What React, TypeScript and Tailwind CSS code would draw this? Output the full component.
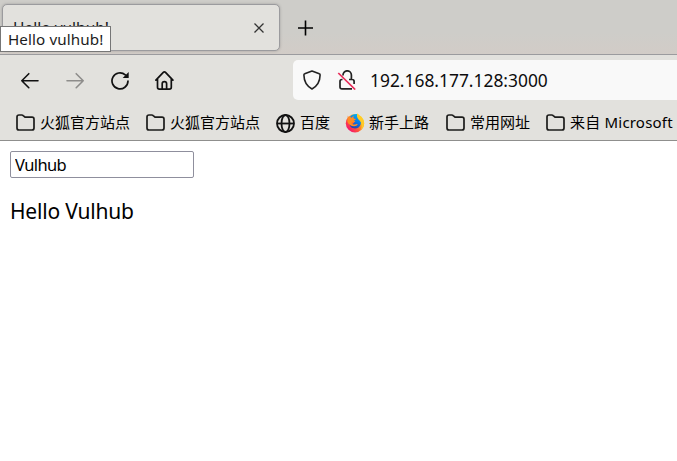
import type { ReactNode } from "react";

const uiFont = "font-['Noto_Sans','Noto_Sans_CJK_SC',sans-serif]";

function FolderIcon() {
  return (
    <svg className="h-5 w-5 shrink-0" viewBox="0 0 20 20" fill="none" stroke="#1c1c1b" strokeWidth="1.7" strokeLinejoin="round">
      <path d="M1 4a2 2 0 0 1 2-2h2.800c.6 0 1 .2 1.400.6L9 4.200H16a2 2 0 0 1 2 2V15a2 2 0 0 1-2 2H3a2 2 0 0 1-2-2Z" />
    </svg>
  );
}

function GlobeIcon() {
  return (
    <svg className="h-5 w-5 shrink-0" viewBox="0 0 20 20" fill="none" stroke="#111" strokeWidth="1.800">
      <circle cx="9.500" cy="10.500" r="8.500" />
      <ellipse cx="9.500" cy="10.500" rx="4" ry="8.500" />
      <path d="M1 10.500h17" />
    </svg>
  );
}

function FirefoxIcon() {
  return (
    <svg className="h-5 w-5 shrink-0" viewBox="0 0 20 20">
      <defs>
        <linearGradient id="flame" x1=".9" y1=".1" x2=".15" y2=".85">
          <stop offset="0" stopColor="#ffe32e" />
          <stop offset=".35" stopColor="#ffb01f" />
          <stop offset=".65" stopColor="#ff5a36" />
          <stop offset="1" stopColor="#f5156c" />
        </linearGradient>
        <linearGradient id="sphere" x1=".7" y1="0" x2=".3" y2="1">
          <stop offset="0" stopColor="#00b5f5" />
          <stop offset=".5" stopColor="#0878e8" />
          <stop offset="1" stopColor="#2b3caa" />
        </linearGradient>
      </defs>
      <circle cx="10" cy="10.200" r="9.200" fill="url(#flame)" />
      <path
        fill="url(#sphere)"
        d="M5 4C6.500 1.800 9.500.5 12.400 1c-.6 1.200-.4 2.200.6 3.200 2.400 2 3.400 4.200 2.700 7-.7 2.700-3 4.300-5.700 4.300-3 0-5.400-1.900-5.600-4.700 1 .9 2.200.8 3.400.1l1.300-1.500 1.400-1.300c-1.400 0-2.300-.5-3-1.100-.7-.7-1.600-1.700-2.500-3Z"
      />
      <path
        fill="#ff8b22"
        d="M2.800 2.400c.2 1 .7 1.600 1.300 2.100 1-.3 1.800-.2 2.600.2.500-.9 1.300-1.500 2.200-1.700-.5.800-.6 1.500-.4 2.100.6.700 1.500.8 2.300.9-.2 1-1.200 1.300-2 1.800l-.2 1.300c-1.100-.1-1.700.2-2 1 .5 1.300 1.900 1.800 3.500 1.300 1-.4 1.700-.7 2.700-.2-.7 1.300-2 2-3.600 2-3.200 0-5.800-2-6.900-4.800Z"
      />
      <path fill="#ffcb27" d="M12.600.3c1 2 4.200 3.300 5.500 6.400.6 1.300 1 3 .9 4.500-.3 2.800-1.900 5.200-4.100 6.500 1.700-2 2.300-4.500 1.700-7-.7-2.700-3.300-4-4.200-6-.5-1.500-.4-3 .2-4.400Z" />
    </svg>
  );
}

function Bookmark({ icon, label, width, gap }: { icon: ReactNode; label: string; width: string; gap: string }) {
  return (
    <div className={`flex h-6 shrink-0 items-center gap-1 ${width} ${gap}`}>
      {icon}
      <span className="-mt-0.5 text-[15px] leading-6 whitespace-nowrap text-black">{label}</span>
    </div>
  );
}

function TabStrip() {
  return (
    <div className="relative flex h-[55px] items-start border-b border-[#9b9b9e] bg-linear-to-b from-[#cecdc9] from-60% to-[#d2ccc7] pt-1 pl-0.5">
      <div className="flex h-[47px] w-[278px] items-center justify-between rounded-[5px] border border-[#9b9b9e] bg-[#e2e1dd] pr-[14px] pl-[10px] shadow-[0_0_3px_rgba(0,0,0,0.22)]">
        <span className="text-[15.500px] leading-5 text-[#15141a]">Hello vulhub!</span>
        <svg className="h-3 w-3" viewBox="0 0 12 12" fill="none" stroke="#333" strokeWidth="1.300">
          <path d="M1.500 1.500l9 9M10.500 1.500l-9 9" />
        </svg>
      </div>
      <svg className="mt-4 ml-[17px] h-4 w-4" viewBox="0 0 16 16" fill="none" stroke="#000" strokeWidth="1.600">
        <path d="M8.500 .5v15M1 8h15" />
      </svg>
      <div className="absolute top-[26px] left-0 flex h-[26px] w-[111px] items-center border border-[#767676] bg-white pl-[7px]">
        <span className="text-[15.200px] leading-5 tracking-[0.1px] whitespace-nowrap text-[#1c1c1c]">Hello vulhub!</span>
      </div>
    </div>
  );
}

function NavigationBar() {
  return (
    <div className="flex h-[50px] items-center pl-5">
      <svg className="h-5 w-5" viewBox="0 0 20 20" fill="none" stroke="#111" strokeWidth="1.600" strokeLinecap="round" strokeLinejoin="round">
        <path d="M18 10.700H1.800M8.800 3.700l-7 7 7 7" />
      </svg>
      <svg className="ml-[25px] h-5 w-5" viewBox="0 0 20 20" fill="none" stroke="#8e8d8b" strokeWidth="1.600" strokeLinecap="round" strokeLinejoin="round">
        <path d="M2 10.700h16.200M11.200 3.700l7 7-7 7" />
      </svg>
      <svg className="ml-[25px] h-5 w-5" viewBox="0 0 20 20" fill="none" stroke="#111" strokeWidth="1.700" strokeLinecap="round">
        <path d="M18 11a8 8 0 1 1-2.700-6.100" />
        <path d="M18.700 2v6h-6Z" fill="#111" stroke="none" />
      </svg>
      <svg className="ml-[25px] h-5 w-5" viewBox="0 0 20 20" fill="none" stroke="#111" strokeWidth="1.700" strokeLinecap="round" strokeLinejoin="round">
        <path d="M.9 10.200l7.400-7.800a1.500 1.500 0 0 1 2.200 0l7.400 7.800M2.500 9v8.200c0 1.100.8 1.900 1.900 1.900h10c1.100 0 1.900-.8 1.900-1.900V9" />
        <path d="M7.200 19v-5.300c0-1.300.8-2.100 2.200-2.100s2.200.8 2.200 2.100V19" />
      </svg>
      <div className="ml-[118px] flex h-10 flex-1 items-center rounded-l-[5px] bg-[#f9f9f9] pl-[9px]">
        <svg className="h-5 w-5" viewBox="0 0 20 20" fill="none" stroke="#222" strokeWidth="1.600" strokeLinejoin="round">
          <path d="M10 1l7.300 2.700c.6.200.9.700.8 1.400-.1 5.500-2.500 11-8.100 13.900C4.400 16.100 2 10.600 1.900 5.100c0-.7.200-1.200.8-1.400Z" />
        </svg>
        <svg className="ml-[15px] h-5 w-5" viewBox="0 0 20 20" fill="none" strokeWidth="1.700">
          <path stroke="#222" d="M6 5.500V5a4.200 4.200 0 0 1 8.400 0V9.500M12 9.500h3.200c1.200 0 1.900.7 1.900 1.900v2.700M15 18.900H5c-1.300 0-2-.7-2-2v-5.400c0-1.300.7-2 2-2h.5" />
          <path stroke="#e82c59" d="M1.300 3l16.900 16.500" />
        </svg>
        <span className="ml-[13px] text-[17.400px] leading-6 text-[#0c0c0d]">192.168.177.128:3000</span>
      </div>
    </div>
  );
}

function BookmarksBar() {
  return (
    <div className="flex h-[35px] items-center overflow-hidden pl-[15px]">
      <Bookmark icon={<FolderIcon />} label="火狐官方站点" width="w-[115px] pl-px" gap="mr-[15px]" />
      <Bookmark icon={<FolderIcon />} label="火狐官方站点" width="w-[115px] pl-px" gap="mr-[16px]" />
      <Bookmark icon={<GlobeIcon />} label="百度" width="w-[54px]" gap="mr-[15px]" />
      <Bookmark icon={<FirefoxIcon />} label="新手上路" width="w-[85px]" gap="mr-[15px]" />
      <Bookmark icon={<FolderIcon />} label="常用网址" width="w-[85px] pl-px" gap="mr-[15px]" />
      <Bookmark icon={<FolderIcon />} label="来自 Microsoft" width="w-[132px] pl-px tracking-[0.2px]" gap="mr-0" />
    </div>
  );
}

export default function App() {
  return (
    <div className={`h-[461px] w-[677px] overflow-hidden bg-white ${uiFont}`}>
      <TabStrip />
      <div className="h-[86px] border-b border-[#8f8f8d] bg-[#e2e1dd]">
        <NavigationBar />
        <BookmarksBar />
      </div>
      <main className="pt-[10px] pl-[10px] text-black">
        <input
          className="block h-[27px] w-[184px] rounded-[2px] border border-[#8f8f9d] bg-white px-[4px] text-[16.500px] tracking-[-0.6px] outline-none"
          defaultValue="Vulhub"
          aria-label="Name"
        />
        <p className="mt-[18px] text-[21px] leading-[30px] tracking-[-0.2px]">Hello Vulhub</p>
      </main>
    </div>
  );
}
